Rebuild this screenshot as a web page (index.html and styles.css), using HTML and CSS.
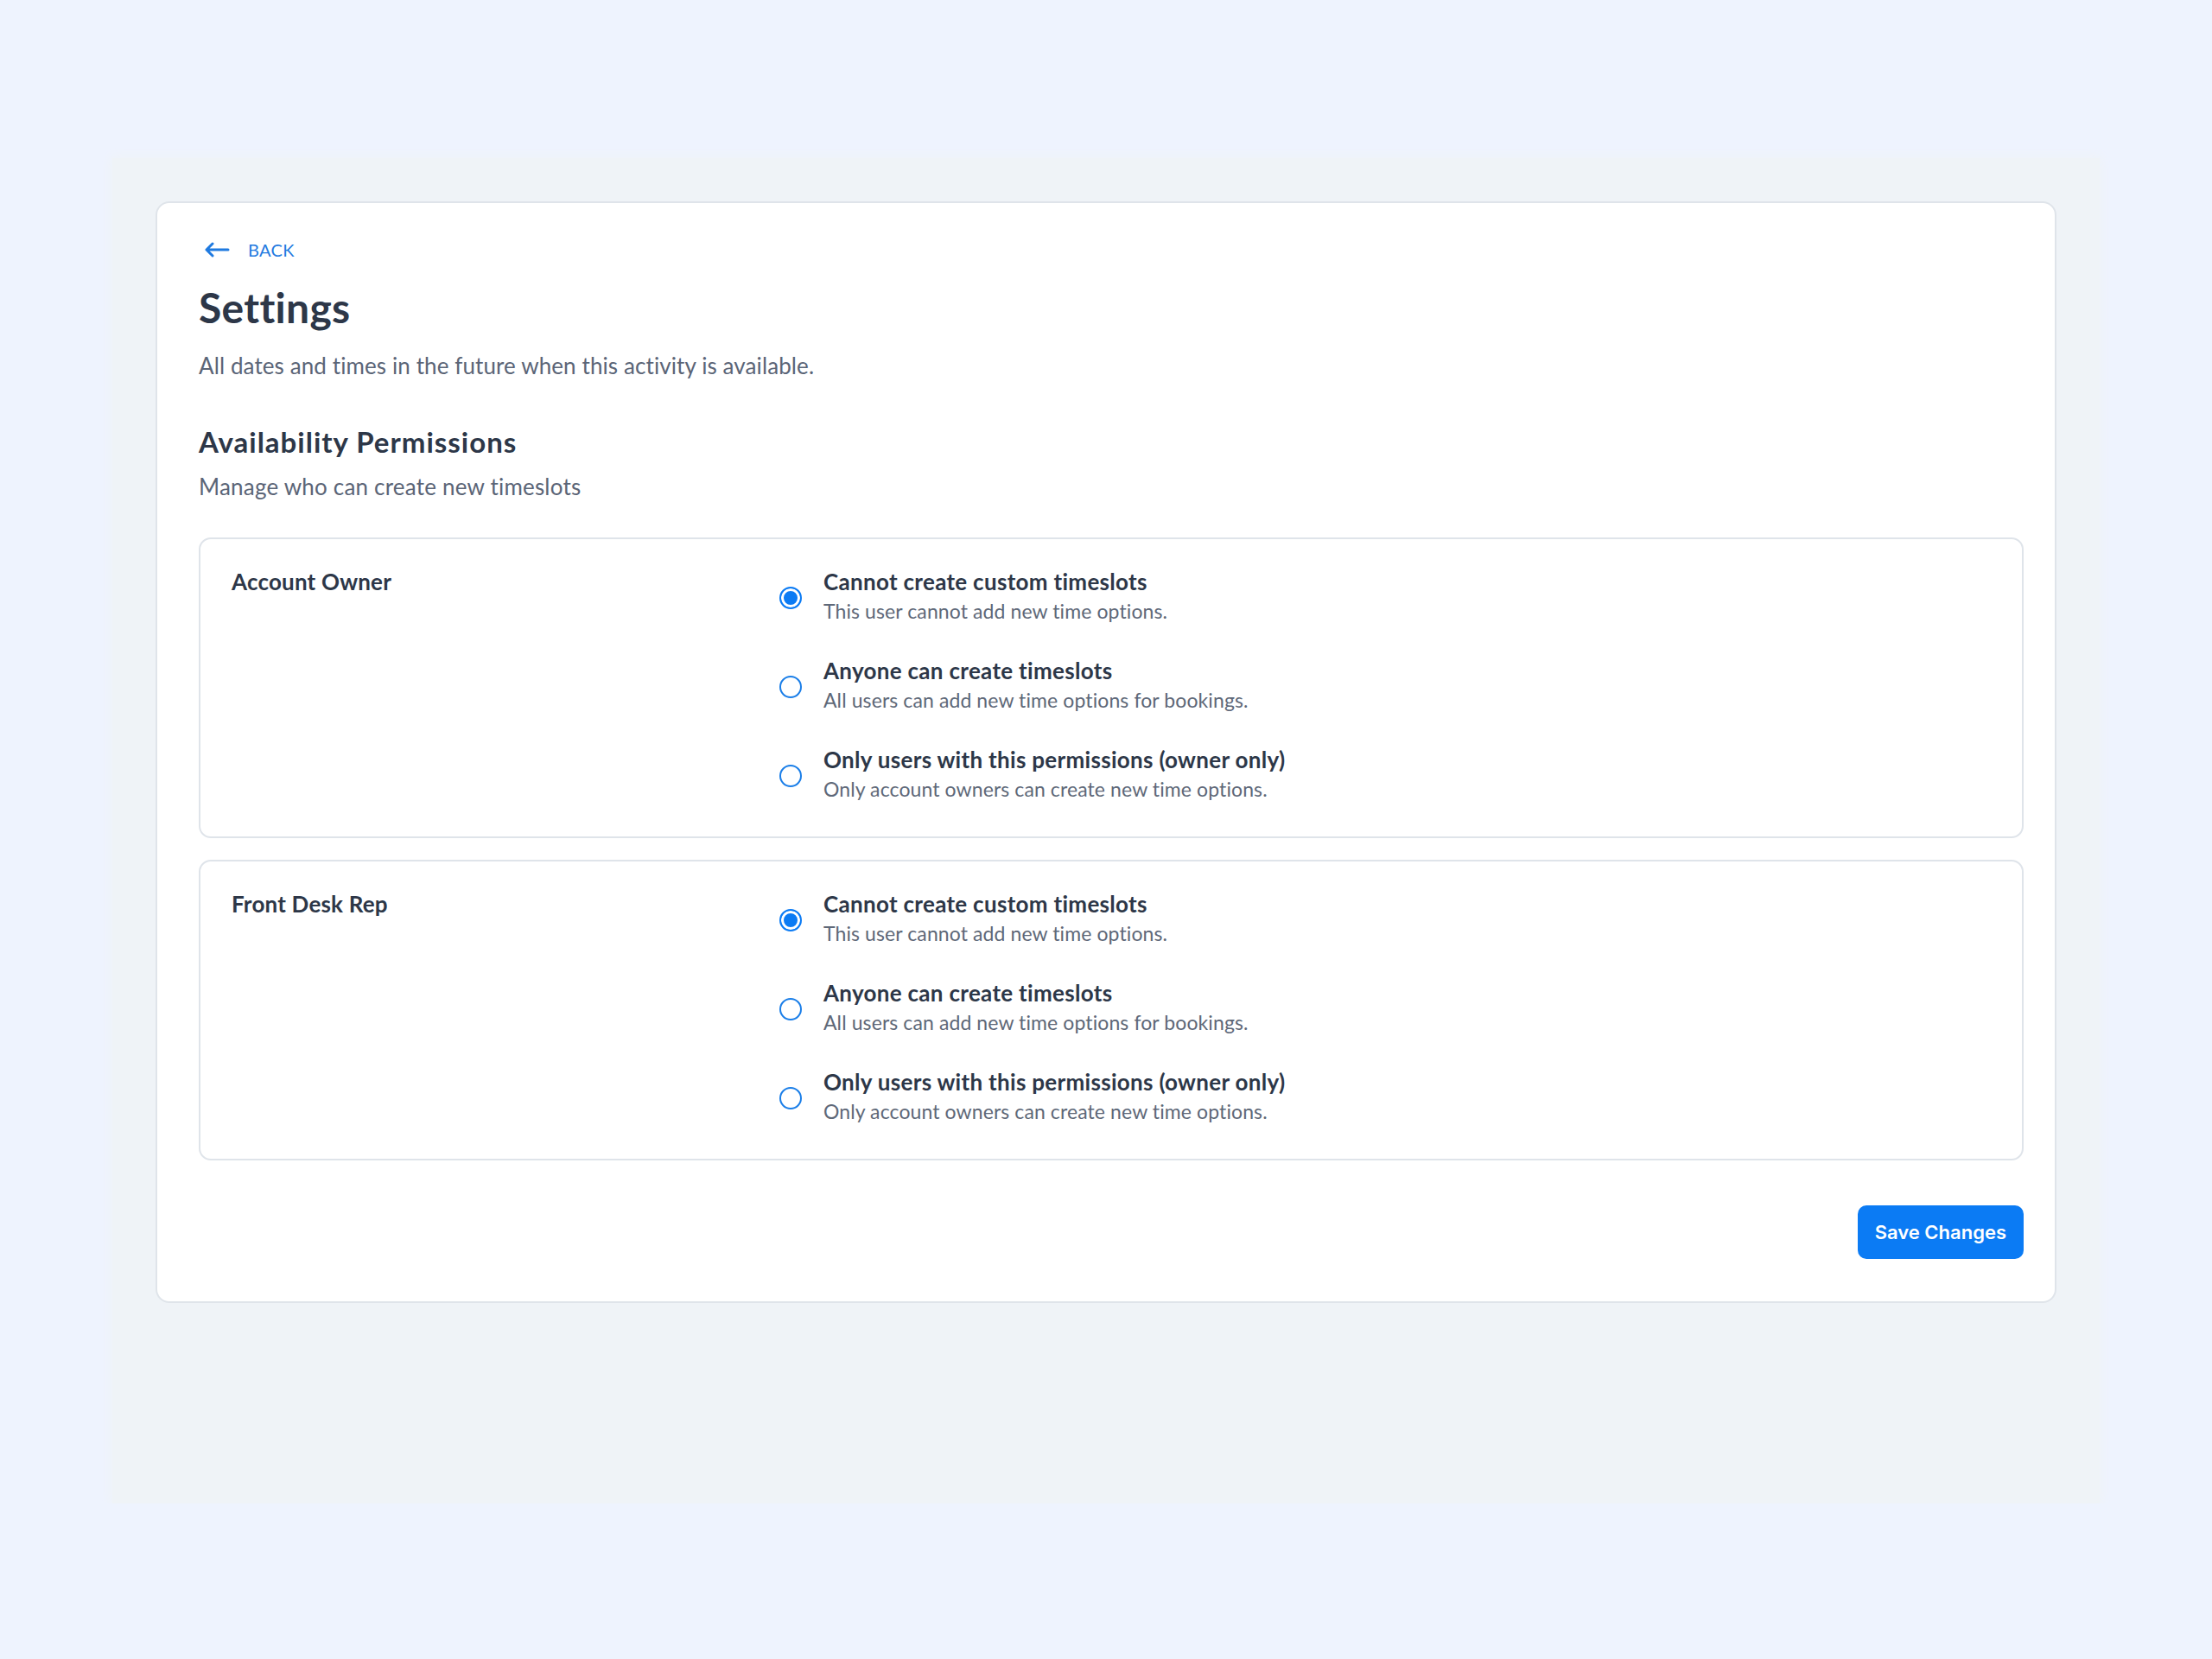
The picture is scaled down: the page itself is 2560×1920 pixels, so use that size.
FILE: index.html
```html
<!DOCTYPE html>
<html lang="en">
<head>
  <meta charset="UTF-8" />
  <title>Settings</title>
  <link rel="stylesheet" href="styles.css">
</head>
<body>
  <div class="stage">
    <div class="card">
      <a class="back" href="#">
        <svg width="30" height="18" viewBox="0 0 30 18" fill="none">
          <path d="M28 9H3M10 2L3 9L10 16" stroke="#1f7ae0" stroke-width="3" stroke-linecap="round" stroke-linejoin="round"/>
        </svg>
        <span>BACK</span>
      </a>
      <h1>Settings</h1>
      <p class="lead">All dates and times in the future when this activity is available.</p>

      <h2>Availability Permissions</h2>
      <p class="lead small-gap">Manage who can create new timeslots</p>

      <div class="perm-box">
        <div class="role">Account Owner</div>
        <div class="options">
          <label class="option">
            <input type="radio" name="owner" checked>
            <span class="opt-text">
              <span class="opt-title">Cannot create custom timeslots</span>
              <span class="opt-desc">This user cannot add new time options.</span>
            </span>
          </label>
          <label class="option">
            <input type="radio" name="owner">
            <span class="opt-text">
              <span class="opt-title">Anyone can create timeslots</span>
              <span class="opt-desc">All users can add new time options for bookings.</span>
            </span>
          </label>
          <label class="option">
            <input type="radio" name="owner">
            <span class="opt-text">
              <span class="opt-title">Only users with this permissions (owner only)</span>
              <span class="opt-desc">Only account owners can create new time options.</span>
            </span>
          </label>
        </div>
      </div>

      <div class="perm-box">
        <div class="role">Front Desk Rep</div>
        <div class="options">
          <label class="option">
            <input type="radio" name="desk" checked>
            <span class="opt-text">
              <span class="opt-title">Cannot create custom timeslots</span>
              <span class="opt-desc">This user cannot add new time options.</span>
            </span>
          </label>
          <label class="option">
            <input type="radio" name="desk">
            <span class="opt-text">
              <span class="opt-title">Anyone can create timeslots</span>
              <span class="opt-desc">All users can add new time options for bookings.</span>
            </span>
          </label>
          <label class="option">
            <input type="radio" name="desk">
            <span class="opt-text">
              <span class="opt-title">Only users with this permissions (owner only)</span>
              <span class="opt-desc">Only account owners can create new time options.</span>
            </span>
          </label>
        </div>
      </div>

      <div class="actions">
        <button class="save">Save Changes</button>
      </div>
    </div>
  </div>
</body>
</html>
```

FILE: styles.css
```css
body { margin: 0; background: #eef3fe; font-family: Lato, "Noto Sans", sans-serif; color: #2d3748; }
.stage { width: 2300px; margin: 183px 0 0 130px; padding: 50px 50px 232px; box-sizing: border-box; background: #eff3f7; box-shadow: 0 0 14px 2px #eff3f7; }
.card { background: #fff; border: 2px solid #dfe4ea; border-radius: 16px; padding: 41px 36px 49px 48px; }

.back { display: flex; align-items: center; gap: 21px; height: 26px; text-decoration: none; color: #1f7ae0; font-size: 20px; margin-left: 6px; }
.back span { letter-spacing: 0.3px; }

h1 { margin: 27px 0 0; font-size: 48px; line-height: 54px; font-weight: 700; letter-spacing: 0.3px; }
h2 { margin: 52px 0 0; font-size: 33px; line-height: 40px; font-weight: 700; letter-spacing: 1px; }
.lead { margin: 24px 0 0; font-size: 26px; line-height: 32px; color: #5b6577; letter-spacing: 0.1px; }
.lead.small-gap { margin-top: 16px; letter-spacing: 0.2px; }

.perm-box { display: grid; grid-template-columns: 634px 1fr; border: 2px solid #dfe4ea; border-radius: 14px; padding: 32px 36px 38px; margin-top: 25px; }
.lead.small-gap + .perm-box { margin-top: 43px; }
.role { font-size: 26px; line-height: 34px; font-weight: 700; letter-spacing: 0.2px; }

.options { display: flex; flex-direction: column; gap: 35px; }
.option { display: flex; align-items: center; gap: 25px; cursor: pointer; }
.option input { appearance: none; margin: 3px 0 0; width: 26px; height: 26px; border: 2px solid #1a7ee8; border-radius: 50%; box-sizing: border-box; flex: none; }
.option input:checked { background: #0b7bf4; box-shadow: inset 0 0 0 3px #fff; border-color: #0b7bf4; }
.opt-text { display: flex; flex-direction: column; }
.opt-title { font-size: 26px; line-height: 34px; font-weight: 700; letter-spacing: 0.3px; }
.opt-desc { font-size: 23px; line-height: 34px; color: #5e6878; letter-spacing: 0.1px; }

.actions { display: flex; justify-content: flex-end; margin-top: 52px; }
.save { height: 62px; padding: 0 20px; border: 0; border-radius: 10px; background: #0b7bf4; color: #fff; font-family: Inter, sans-serif; font-size: 22px; font-weight: 600; }
```
